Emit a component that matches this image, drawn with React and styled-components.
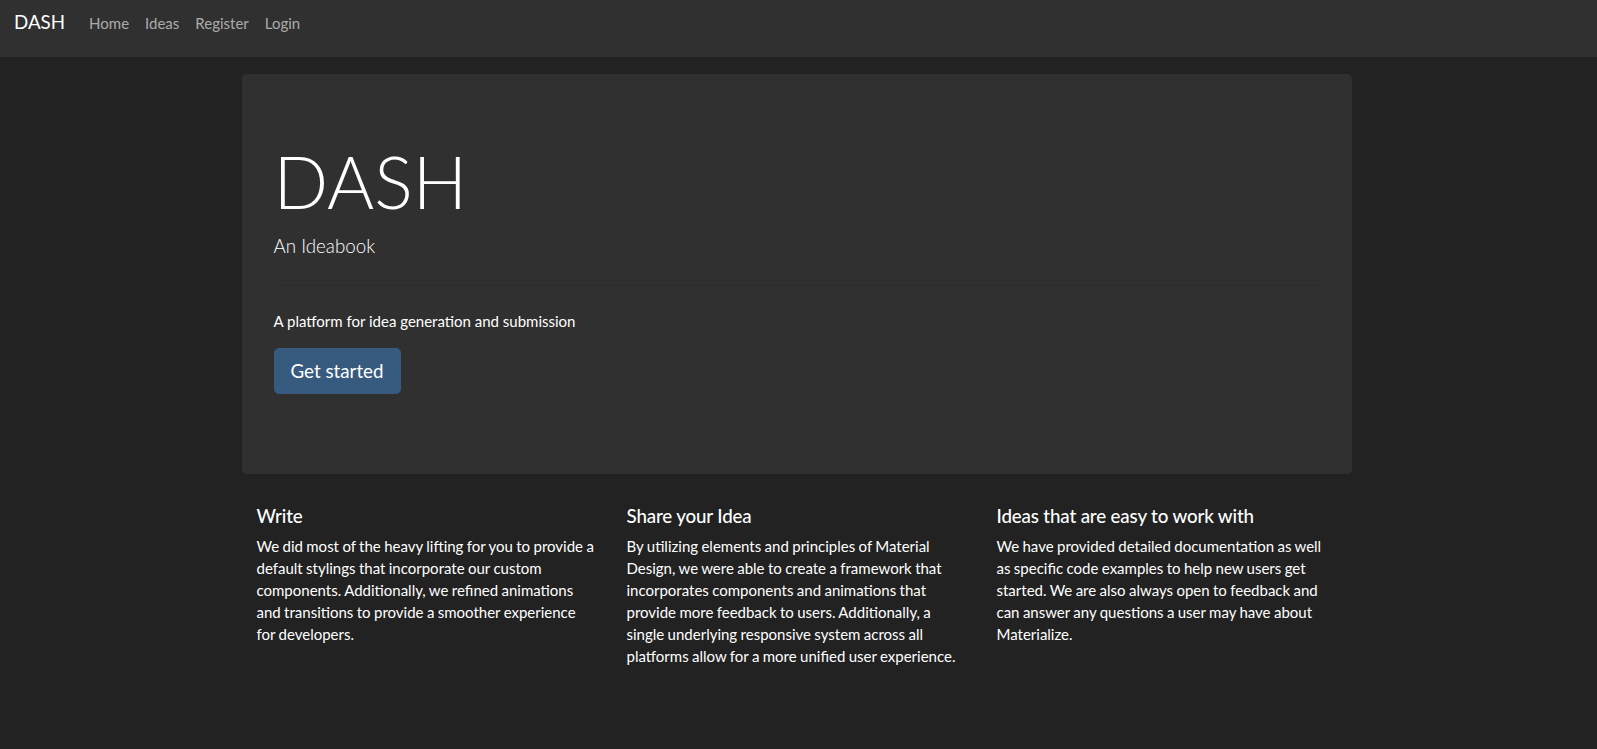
import React from 'react'
import styled, {createGlobalStyle} from 'styled-components'

const GlobalStyle = createGlobalStyle`
    * {
        box-sizing: border-box;
    }
    html {
        font-size: 16px;
    }
    body {
        margin: 0;
        background: #222222;
        color: #ffffff;
        font-family: Lato, "Open Sans", "Liberation Sans", sans-serif;
        font-size: 15px;
        line-height: 1.5;
    }
`

const features = [
    {
        title: "Write",
        text: "We did most of the heavy lifting for you to provide a default stylings that incorporate our custom components. Additionally, we refined animations and transitions to provide a smoother experience for developers.",
    },
    {
        title: "Share your Idea",
        text: "By utilizing elements and principles of Material Design, we were able to create a framework that incorporates components and animations that provide more feedback to users. Additionally, a single underlying responsive system across all platforms allow for a more unified user experience.",
    },
    {
        title: "Ideas that are easy to work with",
        text: "We have provided detailed documentation as well as specific code examples to help new users get started. We are also always open to feedback and can answer any questions a user may have about Materialize.",
    },
]

const links = ["Home", "Ideas", "Register", "Login"]

function App() {
    return (
        <>
            <GlobalStyle/>
            <StyledNavbar>
                <StyledBrand href="#">DASH</StyledBrand>
                <StyledNav>
                    {links.map(link => <StyledNavLink key={link} href="#">{link}</StyledNavLink>)}
                </StyledNav>
            </StyledNavbar>
            <StyledContainer>
                <StyledJumbotron>
                    <StyledDisplay>DASH</StyledDisplay>
                    <StyledLead>An Ideabook</StyledLead>
                    <StyledRule/>
                    <StyledText>A platform for idea generation and submission</StyledText>
                    <StyledLead>
                        <StyledButton href="#">Get started</StyledButton>
                    </StyledLead>
                </StyledJumbotron>
                <StyledRow>
                    {features.map(f => (
                        <StyledCol key={f.title}>
                            <StyledHeading>{f.title}</StyledHeading>
                            <StyledText tight>{f.text}</StyledText>
                        </StyledCol>
                    ))}
                </StyledRow>
            </StyledContainer>
        </>
    )
}

const StyledNavbar = styled.nav`
    display: flex;
    align-items: flex-start;
    height: 57px;
    padding: 8px 16px 0 14px;
    background: #303030;
`
const StyledBrand = styled.a`
    margin-right: 16px;
    color: #ffffff;
    font-size: 18.75px;
    line-height: 1.5;
    text-decoration: none;
`
const StyledNav = styled.div`
    display: flex;
`
const StyledNavLink = styled.a`
    padding: 4px 8px;
    color: rgba(255, 255, 255, 0.6);
    font-size: 15px;
    line-height: 1.5;
    text-decoration: none;
    &:hover {
        color: #ffffff;
    }
`
const StyledContainer = styled.div`
    width: 1110px;
    margin: 17px auto 0 calc(50% - 557px);
`
const StyledJumbotron = styled.div`
    padding: 64px 32px;
    margin-bottom: 31px;
    background: #303030;
    border-radius: 4.8px;
`
const StyledDisplay = styled.h1`
    margin: 0 0 8px 0;
    font-size: 72px;
    font-weight: 300;
    line-height: 1.2;
`
const StyledLead = styled.p`
    margin: 0 0 16px 0;
    font-size: 18.75px;
    font-weight: 300;
    line-height: 1.5;
`
const StyledRule = styled.hr`
    margin: 24px 0;
    border: 0;
    border-top: 1px solid rgba(0, 0, 0, 0.1);
`
const StyledText = styled.p`
    margin: 0 0 16px 0;
    font-size: 15px;
    line-height: 22px;
    word-spacing: ${props => props.tight ? "-0.45px" : "0"};
`
const StyledButton = styled.a`
    display: inline-block;
    padding: 8px 16px;
    border: 1px solid #375a7f;
    border-radius: 4.8px;
    background: #375a7f;
    color: #ffffff;
    font-size: 18.75px;
    font-weight: 400;
    line-height: 1.5;
    text-decoration: none;
    &:hover {
        background: #2b4764;
    }
`
const StyledRow = styled.div`
    display: grid;
    grid-template-columns: repeat(3, 1fr);
`
const StyledCol = styled.div`
    padding: 0 15px;
`
const StyledHeading = styled.h5`
    margin: 0 0 8px 0;
    font-size: 18.75px;
    font-weight: 500;
    line-height: 1.2;
    letter-spacing: -0.15px;
`

export default App
